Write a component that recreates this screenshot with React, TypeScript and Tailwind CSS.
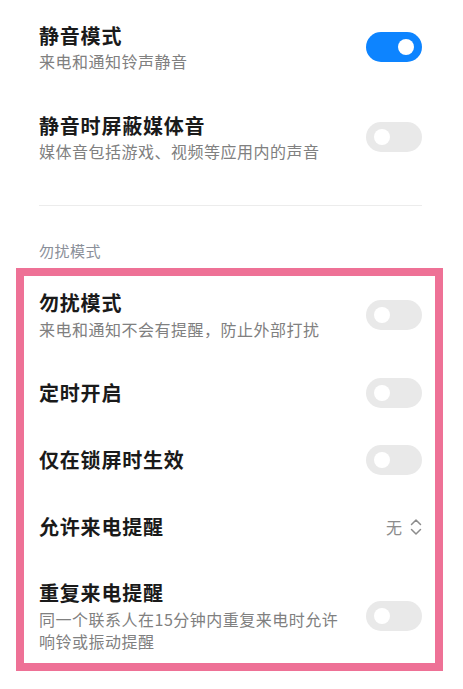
import React from "react";

function Toggle({ on }: { on?: boolean }) {
  return (
    <div
      className={
        "relative shrink-0 w-[56px] h-[30px] rounded-full " +
        (on ? "bg-[#0d84ff]" : "bg-[#e9e9e9]")
      }
    >
      <div
        className={
          "absolute top-[7px] w-[16px] h-[16px] rounded-full bg-white " +
          (on ? "right-[8px]" : "left-[8px]")
        }
      />
    </div>
  );
}

function Title({ children }: { children: React.ReactNode }) {
  return (
    <div className="text-[20px] leading-[26px] font-bold text-[#1a1a1a] tracking-[0.8px]">
      {children}
    </div>
  );
}

function Sub({ children }: { children: React.ReactNode }) {
  return (
    <div className="text-[16px] leading-[22px] text-[#808080] tracking-[0.5px]">
      {children}
    </div>
  );
}

function Chevrons() {
  return (
    <svg width="12" height="18" viewBox="0 0 12 18" fill="none">
      <path d="M1.5 6.5 L6 2 L10.5 6.5" stroke="#8c8c8c" strokeWidth="1.5" strokeLinecap="round" strokeLinejoin="round" />
      <path d="M1.5 11.5 L6 16 L10.5 11.5" stroke="#8c8c8c" strokeWidth="1.5" strokeLinecap="round" strokeLinejoin="round" />
    </svg>
  );
}

export default function App() {
  return (
    <div
      className="w-[463px] h-[689px] bg-white overflow-hidden"
      style={{ fontFamily: '"Noto Sans CJK SC", "Noto Sans", sans-serif' }}
    >
      <div className="pl-[39px] pr-[41px]">
        <div className="h-[94px] flex items-center justify-between">
          <div className="flex flex-col">
            <Title>静音模式</Title>
            <div className="mt-[1px]">
              <Sub>来电和通知铃声静音</Sub>
            </div>
          </div>
          <Toggle on />
        </div>
        <div className="h-[86px] flex items-center justify-between">
          <div className="flex flex-col">
            <Title>静音时屏蔽媒体音</Title>
            <div className="mt-[1px]">
              <Sub>媒体音包括游戏、视频等应用内的声音</Sub>
            </div>
          </div>
          <Toggle />
        </div>
        <div className="mt-[25px] h-px bg-[#ececec]" />
        <div className="mt-[36px] text-[15px] leading-[18px] text-[#8a8f99] tracking-[0.5px]">
          勿扰模式
        </div>
      </div>
      <div className="mt-[8px] ml-[16px] w-[427px] border-[8px] border-[#ee7196] pl-[15px] pr-[13px]">
        <div className="h-[83px] pb-[5px] flex items-center justify-between">
          <div className="flex flex-col">
            <Title>勿扰模式</Title>
            <div className="mt-[2px]">
              <Sub>来电和通知不会有提醒，防止外部打扰</Sub>
            </div>
          </div>
          <Toggle />
        </div>
        <div className="h-[67px] flex items-center justify-between">
          <Title>定时开启</Title>
          <Toggle />
        </div>
        <div className="h-[67px] flex items-center justify-between">
          <Title>仅在锁屏时生效</Title>
          <Toggle />
        </div>
        <div className="h-[67px] flex items-center justify-between">
          <Title>允许来电提醒</Title>
          <div className="flex items-center gap-[8px]">
            <span className="text-[16px] leading-[20px] text-[#8c8c8c]">无</span>
            <Chevrons />
          </div>
        </div>
        <div className="h-[103px] pt-[8px] flex items-center justify-between gap-[20px]">
          <div className="flex flex-col flex-1 min-w-0">
            <Title>重复来电提醒</Title>
            <div className="mt-[2px]">
              <Sub>同一个联系人在15分钟内重复来电时允许响铃或振动提醒</Sub>
            </div>
          </div>
          <Toggle />
        </div>
      </div>
    </div>
  );
}
